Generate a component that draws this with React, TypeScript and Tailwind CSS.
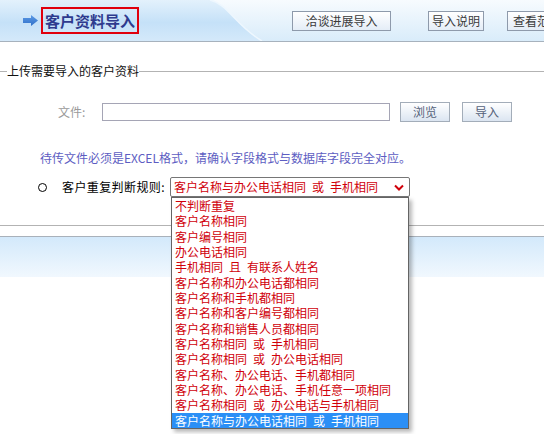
import React from "react";

const rules = [
  "不判断重复",
  "客户名称相同",
  "客户编号相同",
  "办公电话相同",
  "手机相同 且 有联系人姓名",
  "客户名称和办公电话都相同",
  "客户名称和手机都相同",
  "客户名称和客户编号都相同",
  "客户名称和销售人员都相同",
  "客户名称相同 或 手机相同",
  "客户名称相同 或 办公电话相同",
  "客户名称、办公电话、手机都相同",
  "客户名称、办公电话、手机任意一项相同",
  "客户名称相同 或 办公电话与手机相同",
  "客户名称与办公电话相同 或 手机相同",
];

const selected = rules.length - 1;

// the old page font has wide spaces; en-space gets close
const wide = (s: string) => s.replace(/ /g, "\u2002");

function HeaderButton({ label, width }: { label: string; width: string }) {
  return (
    <button
      type="button"
      className={`${width} h-[20px] shrink-0 border border-[#8e9aab] bg-gradient-to-b from-white to-[#e4edf7] text-[12px] leading-[18px] text-[#3a3a3a] whitespace-nowrap overflow-hidden`}
    >
      {label}
    </button>
  );
}

function SmallButton({ label }: { label: string }) {
  return (
    <button
      type="button"
      className="w-[50px] h-[20px] shrink-0 border border-[#a3adb9] bg-gradient-to-b from-white to-[#dbe5f1] text-[12px] leading-[18px] text-[#55627a]"
    >
      {label}
    </button>
  );
}

function ArrowIcon() {
  return (
    <svg width="15" height="11" viewBox="0 0 15 11" className="shrink-0">
      <defs>
        <linearGradient id="arr" x1="0" y1="0" x2="0" y2="1">
          <stop offset="0" stopColor="#5d9be6" />
          <stop offset="1" stopColor="#2f6fc9" />
        </linearGradient>
      </defs>
      <path d="M0 3 H8 V0 L15 5.5 L8 11 V8 H0 Z" fill="url(#arr)" />
    </svg>
  );
}

function HeaderBackdrop() {
  return (
    <svg className="absolute inset-0 z-0" width="544" height="41" viewBox="0 0 544 41" preserveAspectRatio="none">
      <defs>
        <linearGradient id="hl" x1="0" y1="0" x2="0" y2="1">
          <stop offset="0" stopColor="#e3f1fc" />
          <stop offset="0.55" stopColor="#c5e1f8" />
          <stop offset="1" stopColor="#d4e9fa" />
        </linearGradient>
        <linearGradient id="hr" x1="0" y1="0" x2="0" y2="1">
          <stop offset="0" stopColor="#f7fbfe" />
          <stop offset="1" stopColor="#d9ecfa" />
        </linearGradient>
      </defs>
      <rect width="544" height="41" fill="url(#hl)" />
      <path d="M210 0 C 228 4, 236 26, 262 41 L544 41 L544 0 Z" fill="url(#hr)" />
      <path d="M210 0 C 228 4, 236 26, 262 41" fill="none" stroke="#eef7fe" strokeWidth="1.5" />
    </svg>
  );
}

export default function App() {
  const font = { fontFamily: '"Noto Sans CJK SC", "Liberation Sans", sans-serif' };

  return (
    <div className="relative w-[544px] h-[434px] overflow-hidden bg-white text-[12px] text-black" style={font}>
      {/* header bar */}
      <div className="relative h-[42px] border-b border-[#a7b2bd]">
        <HeaderBackdrop />
        <div className="relative z-10 flex items-center h-full pl-[23px] whitespace-nowrap">
          <ArrowIcon />
          <div className="ml-[3px] w-[98px] h-[27px] shrink-0 border-2 border-[#e0000d] flex items-center justify-center">
            <span className="text-[15px] leading-[20px] font-bold text-[#2e3a8e]">客户资料导入</span>
          </div>
          <div className="ml-[153px]">
            <HeaderButton label="洽谈进展导入" width="w-[99px]" />
          </div>
          <div className="ml-[37px]">
            <HeaderButton label="导入说明" width="w-[56px]" />
          </div>
          <div className="ml-[23px]">
            <HeaderButton label="查看范例" width="w-[60px]" />
          </div>
        </div>
      </div>

      {/* upload fieldset */}
      <fieldset className="mt-[21px] border-t border-b border-x-0 border-[#b3b3b3] pb-[28px]">
        <legend className="ml-[7px] text-[12px] leading-[16px] text-[#111]">上传需要导入的客户资料</legend>

        <div className="mt-[23px] flex items-center h-[20px] pl-[58px]">
          <span className="w-[44px] shrink-0 text-[#9a9a9a] leading-[16px]">文件:</span>
          <input type="text" className="w-[288px] h-[18px] border border-[#a5a5b5] bg-white outline-none" />
          <div className="ml-[10px]">
            <SmallButton label="浏览" />
          </div>
          <div className="ml-[12px]">
            <SmallButton label="导入" />
          </div>
        </div>

        <p className="mt-[28px] pl-[40px] leading-[16px] text-[#5d5dc2]">
          待传文件必须是EXCEL格式，请确认字段格式与数据库字段完全对应。
        </p>

        <div className="mt-[11px] flex items-center h-[20px] pl-[38px]">
          <span className="w-[9px] h-[9px] shrink-0 rounded-full border-[1.5px] border-black" />
          <span className="ml-[15px] w-[108px] shrink-0 leading-[16px] tracking-[0.4px]">客户重复判断规则:</span>
          <div className="relative z-20">
            <div className="w-[240px] h-[20px] border border-[#767676] rounded-[2px] bg-white flex items-center justify-between pl-[3px] pr-[5px]">
              <span className="text-[#d0000a] leading-[16px] whitespace-pre">{wide(rules[selected])}</span>
              <svg width="10" height="7" viewBox="0 0 10 7">
                <path d="M1 1.5 L5 5.5 L9 1.5" fill="none" stroke="#d0000a" strokeWidth="2" />
              </svg>
            </div>
            <ul className="absolute top-full left-[1px] w-[238px] border border-[#646464] bg-white shadow-[3px_3px_4px_rgba(0,0,0,0.28)]">
              {rules.map((r, i) => (
                <li
                  key={r}
                  className={
                    i === selected
                      ? "h-[15.35px] leading-[15.35px] pl-[3px] bg-[#2b8ff6] text-white whitespace-pre overflow-hidden"
                      : "h-[15.35px] leading-[15.35px] pl-[3px] text-[#d0000a] whitespace-pre overflow-hidden"
                  }
                >
                  {wide(r)}
                </li>
              ))}
            </ul>
          </div>
        </div>
      </fieldset>

      {/* footer band */}
      <div className="mt-[10px] border-t border-[#a9b1ba] h-[41px] bg-gradient-to-b from-[#d3e9fb] to-[#f1f8fe]" />
    </div>
  );
}
